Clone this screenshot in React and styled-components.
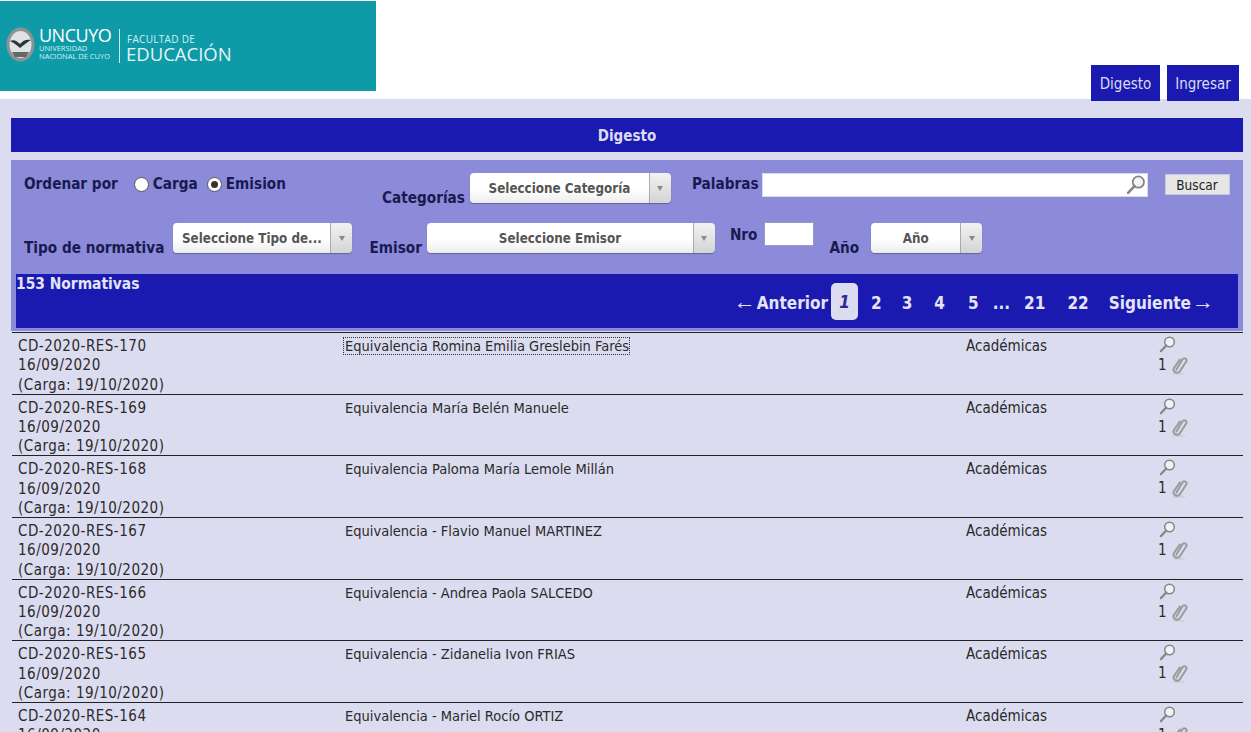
import React from 'react';
import styled, { createGlobalStyle } from 'styled-components';

const GlobalStyle = createGlobalStyle`
  html, body {
    margin: 0;
    height: 100%;
    overflow: hidden;
    background: #dcdcf0;
  }
  body {
    font-family: "DejaVu Sans", Verdana, sans-serif;
    font-stretch: condensed;
    color: #222;
  }
`;

const Header = styled.header`
  height: 99px;
  background: #fff;
  display: flex;
  justify-content: space-between;
  align-items: flex-start;
`;

const Banner = styled.div`
  width: 376px;
  height: 90px;
  margin-top: 1px;
  background: #0f9aa8;
  box-sizing: border-box;
  padding: 26px 0 0 6px;
  display: flex;
  align-items: flex-start;
  color: #fff;
  font-family: "Open Sans", sans-serif;
  font-stretch: normal;
`;

const BrandName = styled.div`
  margin-left: 4px;
  width: 80px;
`;

const Uncuyo = styled.div`
  font-size: 18px;
  line-height: 17px;
  letter-spacing: -0.5px;
`;

const UniLine = styled.div`
  font-size: 7.5px;
  line-height: 8px;
  white-space: nowrap;
  color: #d5f0f2;

  &:first-of-type {
    margin-top: 1px;
  }
`;

const BrandDivider = styled.div`
  width: 1px;
  height: 34px;
  margin: 2px 6px 0 0;
  background: #d5f0f2;
`;

const FacultyTop = styled.div`
  font-size: 10px;
  line-height: 10px;
  margin: 7px 0 0 1px;
  letter-spacing: 0.3px;
  color: #d5f0f2;
`;

const FacultyName = styled.div`
  font-size: 18.5px;
  line-height: 20px;
  white-space: nowrap;
  color: #e4f5f6;
`;

const Nav = styled.nav`
  display: flex;
  gap: 7px;
  margin: 65px 12px 0 0;
`;

const NavItem = styled.a`
  height: 36px;
  width: ${(p) => p.$width}px;
  box-sizing: border-box;
  padding-top: 2px;
  background: #1a1ab0;
  color: #dcdcf0;
  font-size: 15px;
  display: flex;
  align-items: center;
  justify-content: center;
`;

const Main = styled.main`
  padding: 19px 8px 0 11px;
`;

const TitleBar = styled.div`
  height: 34px;
  box-sizing: border-box;
  padding-top: 2px;
  background: #1a1ab0;
  color: #dcdcf0;
  font-size: 15px;
  font-weight: bold;
  display: flex;
  align-items: center;
  justify-content: center;
`;

const Panel = styled.section`
  margin-top: 8px;
  background: #8b8bd9;
  box-sizing: border-box;
  height: 171px;
  padding: 0 5px;
`;

const FilterRow = styled.div`
  height: ${(p) => p.$height}px;
  display: flex;
  align-items: flex-start;
  padding-top: ${(p) => p.$top}px;
  box-sizing: border-box;
`;

const Label = styled.label`
  font-size: 15.2px;
  font-weight: bold;
  line-height: 18px;
  color: #1a1a50;
  white-space: nowrap;
  margin-left: ${(p) => p.$left || 0}px;
  margin-top: ${(p) => p.$top || 0}px;
`;

const Radio = styled.span`
  width: 13px;
  height: 13px;
  margin: 4px 4px 0 ${(p) => p.$left}px;
  border-radius: 50%;
  background: #fff;
  border: 1px solid #555;
  flex: none;
  display: flex;
  align-items: center;
  justify-content: center;

  &::after {
    content: '';
    width: 7px;
    height: 7px;
    border-radius: 50%;
    background: ${(p) => (p.$checked ? '#333' : 'transparent')};
  }
`;

const Select = styled.div`
  width: ${(p) => p.$width}px;
  height: 30px;
  margin-left: ${(p) => p.$left}px;
  flex: none;
  display: flex;
  border-radius: 4px;
  overflow: hidden;
  box-shadow: 0 1px 1px rgba(60, 60, 90, 0.5);
`;

const SelectText = styled.div`
  flex: 1;
  min-width: 0;
  background: linear-gradient(#fff 55%, #ececec);
  color: #555;
  font-size: 13.3px;
  font-weight: bold;
  display: flex;
  align-items: center;
  justify-content: center;
  white-space: nowrap;
`;

const SelectArrow = styled.div`
  width: 21px;
  flex: none;
  border-left: 1px solid #aaa;
  background: linear-gradient(#f2f2f2, #d4d4d4);
  display: flex;
  align-items: center;
  justify-content: center;

  &::after {
    content: '';
    border-left: 3px solid transparent;
    border-right: 3px solid transparent;
    border-top: 5px solid #888;
  }
`;

const SearchBox = styled.div`
  width: 384px;
  height: 22px;
  margin: 1px 0 0 4px;
  background: #fff;
  box-shadow: 0 0 0 1px #d8d8ee;
  display: flex;
  align-items: center;
  justify-content: flex-end;
  padding-right: 1px;
  box-sizing: border-box;
`;

const SearchButton = styled.button`
  width: 65px;
  height: 21px;
  margin: 1px 0 0 18px;
  padding: 0;
  border: 1px solid #c8c8d8;
  background: #e6e6e6;
  color: #222;
  font-family: inherit;
  font-stretch: inherit;
  font-size: 13.5px;
`;

const NumberBox = styled.div`
  width: 50px;
  height: 24px;
  margin: -1px 0 0 6px;
  background: #fff;
  box-sizing: border-box;
  border: 1px solid #9a9ac0;
  flex: none;
`;

const ResultsBar = styled.div`
  height: 54px;
  background: #1a1ab0;
  color: #e4e4f6;
  font-weight: bold;
  display: flex;
  justify-content: space-between;
  box-sizing: border-box;
`;

const Total = styled.div`
  font-size: 15.4px;
  line-height: 20px;
`;

const Pager = styled.div`
  display: flex;
  align-items: center;
  height: 37px;
  margin: 9px 24px 0 0;
  font-size: 17px;
`;

const PageLink = styled.span`
  margin-left: ${(p) => p.$left || 0}px;
  padding-top: 2px;
  line-height: 20px;
  white-space: nowrap;
`;

const Arrow = styled.span`
  font-family: "Liberation Sans", Arial, sans-serif;
  font-stretch: normal;
  font-weight: normal;
  font-size: 22px;
  line-height: 0;
  margin: 0 ${(p) => (p.$before ? 1 : 0)}px 0 ${(p) => (p.$before ? 0 : 1)}px;
`;

const CurrentPage = styled.span`
  width: 27px;
  height: 37px;
  margin-left: 3px;
  border-radius: 5px;
  background: #dcdcf0;
  color: #2a2a90;
  font-style: italic;
  display: flex;
  align-items: center;
  justify-content: center;
`;

const List = styled.div`
  margin: 1px 0 0 1px;
`;

const Row = styled.article`
  height: 61.67px;
  box-sizing: border-box;
  border-top: 1px solid #222;
  display: grid;
  grid-template-columns: 326px 622px 192px 1fr;
  padding: 4px 0 0 6px;
  font-size: 15px;
  line-height: 19.3px;
  color: #2a2a2a;
`;

const Code = styled.div`
  letter-spacing: 0.5px;
`;

const Title = styled.div`
  font-size: 14.5px;

  span {
    outline: ${(p) => (p.$focused ? '1px dotted #333' : 'none')};
    padding: 0 0 0 1px;
  }
`;

const Actions = styled.div`
  display: flex;
  flex-direction: column;
  align-items: flex-start;
`;

const LensSlot = styled.div`
  height: 18px;
  margin: -1px 0 0 1px;
`;

const AttachCount = styled.div`
  display: flex;
  align-items: center;
  gap: 4px;
  height: 19px;
  line-height: 19px;
  margin-top: 2px;
`;

const Lens = ({ size = 17 }) => (
  <svg width={size} height={size} viewBox="0 0 17 17" fill="none">
    <circle cx="10.5" cy="6" r="4.8" fill="#f2f2f6" stroke="#858585" strokeWidth="1.5" />
    <path d="M7.2 9.4 L1.8 15.2" stroke="#858585" strokeWidth="2.2" strokeLinecap="round" />
  </svg>
);

const Clip = () => (
  <svg width="17" height="19" viewBox="0 0 17 19" fill="none">
    <ellipse cx="8" cy="17.8" rx="7" ry="1" fill="#d0d0da" />
    <path
      d="M5.4 13.4 L11.4 3.4 C13 1 16.6 2.8 15.2 5.6 L8.8 15.4 C6.8 18.2 1 16 2.8 12.2 L8.8 3.6"
      stroke="#9c9c9c"
      strokeWidth="2"
      strokeLinecap="round"
    />
  </svg>
);

const Seal = () => (
  <svg width="29" height="35" viewBox="0 0 29 35">
    <ellipse cx="14.5" cy="17.5" rx="14" ry="17" fill="#8d9294" />
    <ellipse cx="14.5" cy="17.5" rx="11" ry="13.5" fill="#dfe3e2" />
    <path d="M4 14 C8 12 12 15 14 17 C17 13 21 12 25 13 C21 15 18 18 14 21 C11 18 8 16 4 14 Z" fill="#2d3436" />
    <path d="M6 25 H23 L20 30 H9 Z" fill="#63696b" />
  </svg>
);

const rows = [
  ['CD-2020-RES-170', 'Equivalencia Romina Emilia Greslebin Farés'],
  ['CD-2020-RES-169', 'Equivalencia María Belén Manuele'],
  ['CD-2020-RES-168', 'Equivalencia Paloma María Lemole Millán'],
  ['CD-2020-RES-167', 'Equivalencia - Flavio Manuel MARTINEZ'],
  ['CD-2020-RES-166', 'Equivalencia - Andrea Paola SALCEDO'],
  ['CD-2020-RES-165', 'Equivalencia - Zidanelia Ivon FRIAS'],
  ['CD-2020-RES-164', 'Equivalencia - Mariel Rocío ORTIZ'],
];

const App = () => (
  <>
    <GlobalStyle />
    <Header>
      <Banner>
        <Seal />
        <BrandName>
          <Uncuyo>UNCUYO</Uncuyo>
          <UniLine>UNIVERSIDAD</UniLine>
          <UniLine>NACIONAL DE CUYO</UniLine>
        </BrandName>
        <BrandDivider />
        <div>
          <FacultyTop>FACULTAD DE</FacultyTop>
          <FacultyName>EDUCACIÓN</FacultyName>
        </div>
      </Banner>
      <Nav>
        <NavItem $width={69}>Digesto</NavItem>
        <NavItem $width={72}>Ingresar</NavItem>
      </Nav>
    </Header>
    <Main>
      <TitleBar>Digesto</TitleBar>
      <Panel>
        <FilterRow $height={56} $top={13}>
          <Label $left={8} $top={2}>Ordenar por</Label>
          <Radio $left={16} />
          <Label $top={2}>Carga</Label>
          <Radio $left={9} $checked />
          <Label $top={2}>Emision</Label>
          <Label $left={96} $top={16}>Categorías</Label>
          <Select $width={201} $left={5}>
            <SelectText>Seleccione Categoría</SelectText>
            <SelectArrow />
          </Select>
          <Label $left={21} $top={2}>Palabras</Label>
          <SearchBox><Lens size={20} /></SearchBox>
          <SearchButton type="button">Buscar</SearchButton>
        </FilterRow>
        <FilterRow $height={58} $top={7}>
          <Label $left={8} $top={16}>Tipo de normativa</Label>
          <Select $width={179} $left={9}>
            <SelectText>Seleccione Tipo de...</SelectText>
            <SelectArrow />
          </Select>
          <Label $left={17} $top={16}>Emisor</Label>
          <Select $width={288} $left={5}>
            <SelectText>Seleccione Emisor</SelectText>
            <SelectArrow />
          </Select>
          <Label $left={15} $top={3}>Nro</Label>
          <NumberBox />
          <Label $left={16} $top={16}>Año</Label>
          <Select $width={111} $left={12}>
            <SelectText>Año</SelectText>
            <SelectArrow />
          </Select>
        </FilterRow>
        <ResultsBar>
          <Total>153 Normativas</Total>
          <Pager>
            <PageLink><Arrow $before>←</Arrow>Anterior</PageLink>
            <CurrentPage>1</CurrentPage>
            <PageLink $left={13}>2</PageLink>
            <PageLink $left={20}>3</PageLink>
            <PageLink $left={22}>4</PageLink>
            <PageLink $left={23}>5</PageLink>
            <PageLink $left={14}>...</PageLink>
            <PageLink $left={14}>21</PageLink>
            <PageLink $left={22}>22</PageLink>
            <PageLink $left={20}>Siguiente<Arrow>→</Arrow></PageLink>
          </Pager>
        </ResultsBar>
      </Panel>
      <List>
        {rows.map(([code, title], i) => (
          <Row key={code}>
            <Code>
              {code}
              <br />
              16/09/2020
              <br />
              (Carga: 19/10/2020)
            </Code>
            <Title $focused={i === 0}>
              <span>{title}</span>
            </Title>
            <div>Académicas</div>
            <Actions>
              <LensSlot><Lens /></LensSlot>
              <AttachCount>
                1 <Clip />
              </AttachCount>
            </Actions>
          </Row>
        ))}
      </List>
    </Main>
  </>
);

export default App;
